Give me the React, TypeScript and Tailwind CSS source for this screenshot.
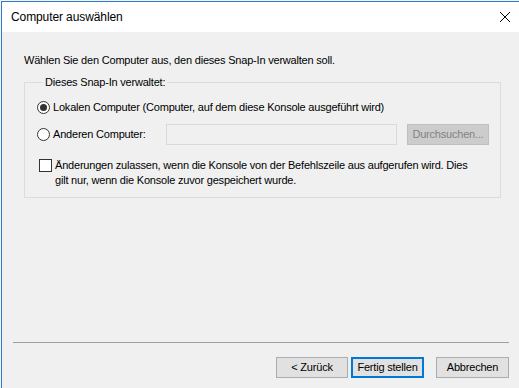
export default function App() {
  const font = { fontFamily: '"Liberation Sans", Arial, sans-serif' };
  return (
    <div className="w-[519px] h-[388px] overflow-hidden bg-[#f4f4f4] pt-px pl-px text-black" style={font}>
      <div className="flex h-full flex-col border-l border-t border-[#2b7bd4] text-[11px] tracking-[-0.2px]">
        {/* Title bar */}
        <div className="flex h-[30px] items-center justify-between bg-white pl-[9px] pr-[7px]">
          <span className="text-[12px] tracking-[-0.1px]">Computer auswählen</span>
          <svg width="12" height="12" viewBox="0 0 12 12" className="mr-[1px]">
            <path d="M1 1 L11 11 M11 1 L1 11" stroke="#000" strokeWidth="1" />
          </svg>
        </div>

        {/* Body */}
        <div className="flex flex-1 flex-col bg-[#f0f0f0] pl-[22px] pr-[10px] pt-[21px] leading-[15px]">
          <p>Wählen Sie den Computer aus, den dieses Snap-In verwalten soll.</p>

          {/* Group box */}
          <fieldset className="mt-[8px] mr-[8px] h-[122px] border border-[#dcdcdc] pl-[12px] pr-[10px]">
            <legend className="ml-[6px] px-[2px] leading-[13px]">Dieses Snap-In verwaltet:</legend>

            <div className="mt-[11px] flex items-center gap-[3px]">
              <span className="flex h-[13px] w-[13px] items-center justify-center rounded-full border border-[#333] bg-white">
                <span className="h-[7px] w-[7px] rounded-full bg-[#333]" />
              </span>
              <span>Lokalen Computer (Computer, auf dem diese Konsole ausgeführt wird)</span>
            </div>

            <div className="mt-[9px] flex items-center">
              <span className="h-[13px] w-[13px] rounded-full border border-[#333] bg-white" />
              <span className="ml-[3px] w-[113px]">Anderen Computer:</span>
              <div className="h-[21px] w-[231px] border border-[#d9d9d9] bg-[#f0f0f0]" />
              <div className="ml-[10px] flex h-[21px] w-[82px] items-center justify-center border border-[#bfbfbf] bg-[#cccccc] text-[#838383]">
                Durchsuchen...
              </div>
            </div>

            <div className="mt-[13px] flex items-start gap-[3px] pl-[2px]">
              <span className="mt-[1px] h-[13px] w-[13px] shrink-0 border border-[#333] bg-white" />
              <span className="leading-[15px] whitespace-nowrap">
                Änderungen zulassen, wenn die Konsole von der Befehlszeile aus aufgerufen wird. Dies
                <br />
                gilt nur, wenn die Konsole zuvor gespeichert wurde.
              </span>
            </div>
          </fieldset>

          <div className="flex-1" />

          {/* Separator */}
          <div className="-ml-[11px] border-t border-[#a0a0a0]" />

          {/* Buttons */}
          <div className="mb-[10px] mt-[14px] flex justify-end">
            <button className="flex h-[21px] w-[72px] items-center justify-center border border-[#adadad] bg-[#e1e1e1]">
              &lt; Zurück
            </button>
            <button className="ml-[3px] flex h-[21px] w-[73px] items-center justify-center border-2 border-[#0078d7] bg-[#e1e1e1]">
              Fertig stellen
            </button>
            <button className="ml-[12px] flex h-[21px] w-[73px] items-center justify-center border border-[#adadad] bg-[#e1e1e1]">
              Abbrechen
            </button>
          </div>
        </div>
      </div>
    </div>
  );
}
